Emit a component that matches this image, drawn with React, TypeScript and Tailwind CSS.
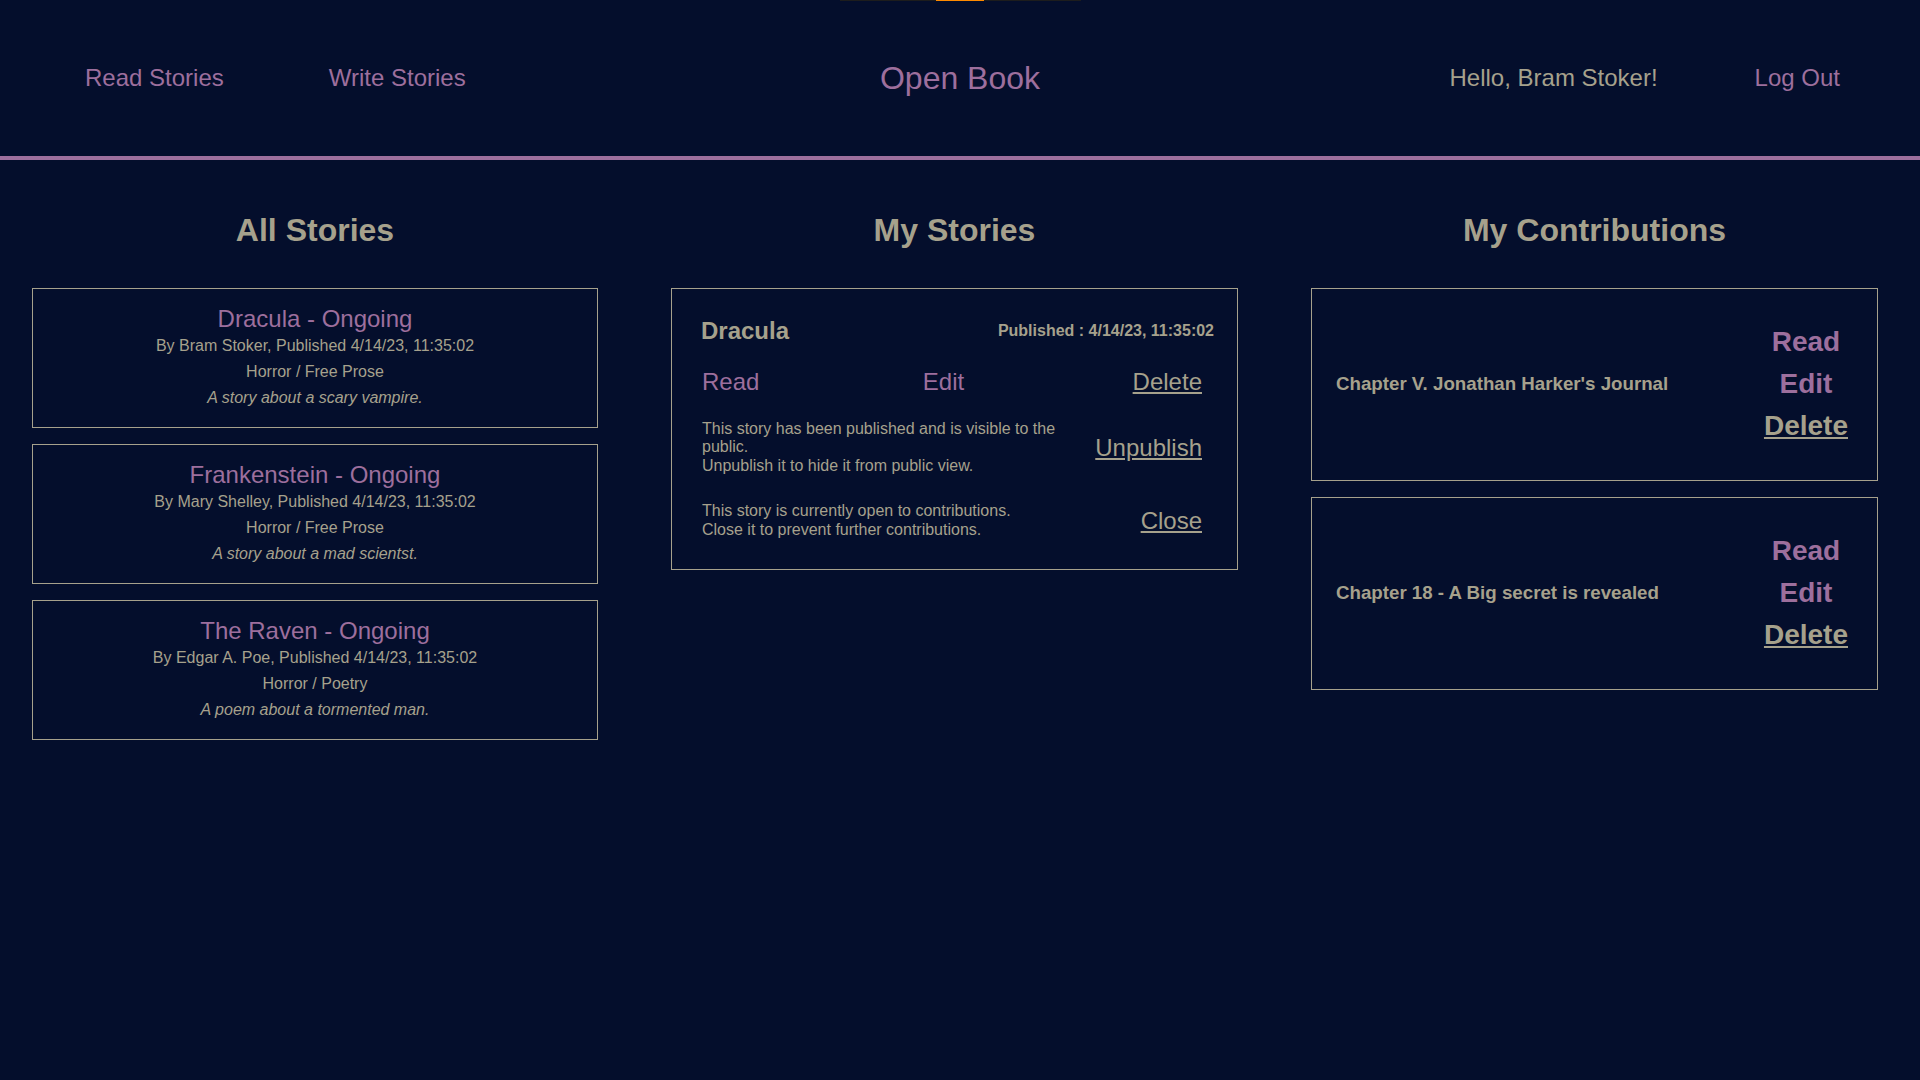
import React from "react";

type Story = {
  title: string;
  author: string;
  published: string;
  genre: string;
  summary: string;
};

type Contribution = {
  title: string;
};

const stories: Story[] = [
  {
    title: "Dracula",
    author: "Bram Stoker",
    published: "4/14/23, 11:35:02",
    genre: "Horror / Free Prose",
    summary: "A story about a scary vampire.",
  },
  {
    title: "Frankenstein",
    author: "Mary Shelley",
    published: "4/14/23, 11:35:02",
    genre: "Horror / Free Prose",
    summary: "A story about a mad scientst.",
  },
  {
    title: "The Raven",
    author: "Edgar A. Poe",
    published: "4/14/23, 11:35:02",
    genre: "Horror / Poetry",
    summary: "A poem about a tormented man.",
  },
];

const contributions: Contribution[] = [
  { title: "Chapter V. Jonathan Harker's Journal" },
  { title: "Chapter 18 - A Big secret is revealed" },
];

function StoryCard({ story }: { story: Story }) {
  return (
    <div className="border border-[#a6a18c] pt-[16px] pb-[16px] text-center">
      <a href="#" className="block text-[24px] leading-[28px] text-[#9d6f9d]">
        {story.title} - Ongoing
      </a>
      <p className="text-[16px] leading-[26px]">
        By {story.author}, Published {story.published}
      </p>
      <p className="text-[16px] leading-[26px]">{story.genre}</p>
      <p className="text-[16px] leading-[26px] italic">{story.summary}</p>
    </div>
  );
}

function MyStoryCard() {
  return (
    <div className="border border-[#a6a18c] pt-[28px] pb-[30px] pl-[30px] pr-[23px]">
      <div className="-ml-px flex h-[28px] items-center justify-between">
        <h3 className="text-[24px] font-bold leading-[28px]">Dracula</h3>
        <span className="text-[16px] font-bold">Published : 4/14/23, 11:35:02</span>
      </div>

      <div className="mt-[23px] mr-[12px] flex items-center justify-between text-[24px] leading-[28px]">
        <a href="#" className="text-[#9d6f9d]">Read</a>
        <a href="#" className="mr-[5px] text-[#9d6f9d]">Edit</a>
        <a href="#" className="underline">Delete</a>
      </div>

      <div className="mt-[24px] mr-[12px] flex items-center justify-between">
        <p className="max-w-[370px] text-[16px] leading-[18.4px]">
          This story has been published and is visible to the public.
          <br />
          Unpublish it to hide it from public view.
        </p>
        <a href="#" className="text-[24px] leading-[28px] underline">Unpublish</a>
      </div>

      <div className="mt-[27px] mr-[12px] flex items-center justify-between">
        <p className="text-[16px] leading-[18.4px]">
          This story is currently open to contributions.
          <br />
          Close it to prevent further contributions.
        </p>
        <a href="#" className="text-[24px] leading-[28px] underline">Close</a>
      </div>
    </div>
  );
}

function ContributionCard({ item }: { item: Contribution }) {
  return (
    <div className="flex items-center justify-between border border-[#a6a18c] pt-8 pb-[33px] pl-6 pr-[29px]">
      <h3 className="text-[18.72px] font-bold">{item.title}</h3>
      <div className="flex flex-col items-center text-[28px] font-bold leading-[42px]">
        <a href="#" className="text-[#9d6f9d]">Read</a>
        <a href="#" className="text-[#9d6f9d]">Edit</a>
        <a href="#" className="underline">Delete</a>
      </div>
    </div>
  );
}

export default function App() {
  return (
    <div className="relative min-h-screen bg-[#040e2c] font-['Liberation_Sans',Arial,sans-serif] text-[#a6a18c]">
      {/* page loading bar */}
      <div className="absolute top-0 left-[840px] h-px w-[241px] bg-[#1d1d1d]">
        <div className="absolute top-0 left-[96px] h-px w-[48px] bg-[#ff8a00]" />
      </div>

      <header className="grid h-[160px] grid-cols-3 items-center border-b-4 border-[#9d6f9d] text-[24px]">
        <nav className="flex gap-[105px] pl-[85px]">
          <a href="#" className="text-[#9d6f9d]">Read Stories</a>
          <a href="#" className="text-[#9d6f9d]">Write Stories</a>
        </nav>
        <div className="text-center">
          <a href="#" className="text-[32px] text-[#9d6f9d]">Open Book</a>
        </div>
        <div className="flex justify-end gap-[97px] pr-[80px]">
          <span>Hello, Bram Stoker!</span>
          <a href="#" className="text-[#9d6f9d]">Log Out</a>
        </div>
      </header>

      <main className="grid grid-cols-[566px_567px_567px] gap-x-[73px] pt-[52px] pl-8">
        <section>
          <h2 className="mb-[39px] text-center text-[32px] font-bold leading-[37px]">All Stories</h2>
          <div className="flex flex-col gap-[16px]">
            {stories.map((s) => (
              <StoryCard key={s.title} story={s} />
            ))}
          </div>
        </section>

        <section>
          <h2 className="mb-[39px] text-center text-[32px] font-bold leading-[37px]">My Stories</h2>
          <MyStoryCard />
        </section>

        <section>
          <h2 className="mb-[39px] text-center text-[32px] font-bold leading-[37px]">My Contributions</h2>
          <div className="flex flex-col gap-[16px]">
            {contributions.map((c) => (
              <ContributionCard key={c.title} item={c} />
            ))}
          </div>
        </section>
      </main>
    </div>
  );
}
